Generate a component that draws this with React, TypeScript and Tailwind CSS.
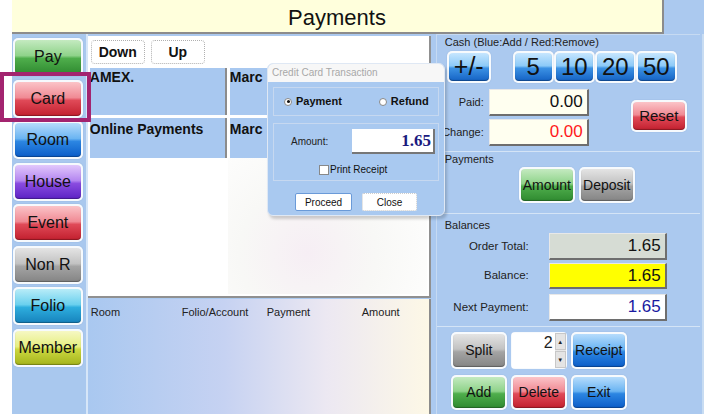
import React from 'react';

/* ── glossy button tones ─────────────────────────────────────────── */
const tones: Record<string, string> = {
  green: 'bg-[linear-gradient(to_bottom,#c4eac0_0%,#8fd38a_46%,#4fae4c_54%,#2f8a30_100%)]',
  red: 'bg-[linear-gradient(to_bottom,#fbc4c8_0%,#f08a94_46%,#e04a58_54%,#c21f2e_100%)]',
  blue: 'bg-[linear-gradient(to_bottom,#b6dcfc_0%,#6ab4f2_46%,#2c86e2_54%,#0a5cc8_100%)]',
  purple: 'bg-[linear-gradient(to_bottom,#e2c8fc_0%,#b486f0_46%,#8a4ce0_54%,#5c22c4_100%)]',
  gray: 'bg-[linear-gradient(to_bottom,#e4e4e4_0%,#c2c2c2_46%,#a4a4a4_54%,#848484_100%)]',
  cyan: 'bg-[linear-gradient(to_bottom,#b8ecf8_0%,#6ad0ee_46%,#2eaede_54%,#1682bc_100%)]',
  lime: 'bg-[linear-gradient(to_bottom,#f6f8c4_0%,#e6ee80_46%,#ccd840_54%,#a4b41c_100%)]',
  cash: 'bg-[linear-gradient(to_bottom,#c6e6fe_0%,#8ccaf8_46%,#3c92e4_54%,#1462c4_100%)]',
};

function Gloss({
  label,
  tone,
  className,
  text = 'text-[16px]',
}: {
  label: string;
  tone: string;
  className: string;
  text?: string;
}) {
  return (
    <div className={`rounded-[5px] bg-white/90 p-[2px] shadow-[0_0_1px_#7a9cc8] ${className}`}>
      <div
        className={`w-full h-full rounded-[4px] flex items-center justify-center text-[#111] ${text} ${tones[tone]} shadow-[inset_0_-1px_1px_rgba(0,0,0,0.3)]`}
      >
        {label}
      </div>
    </div>
  );
}

/* ── text field with sunken look ──────────────────────────────────── */
function Field({ value, className, color = 'text-[#111]' }: { value: string; className: string; color?: string }) {
  return (
    <div
      className={`flex items-center justify-end pr-[4px] text-[17px] ${color} border-r-2 border-b-2 border-[#6e6e6e] border-t border-l border-t-[#e8e8e8] border-l-[#e8e8e8] ${className}`}
    >
      {value}
    </div>
  );
}

const sideButtons = [
  { label: 'Pay', tone: 'green' },
  { label: 'Card', tone: 'red' },
  { label: 'Room', tone: 'blue' },
  { label: 'House', tone: 'purple' },
  { label: 'Event', tone: 'red' },
  { label: 'Non R', tone: 'gray' },
  { label: 'Folio', tone: 'cyan' },
  { label: 'Member', tone: 'lime' },
];

export default function App() {
  return (
    <div className="relative w-[704px] h-[414px] overflow-hidden bg-[#abc9ef] flex flex-col font-['Liberation_Sans',Arial,sans-serif] text-[#111]">
      {/* ── title bar ── */}
      <div className="flex h-[34px] shrink-0">
        <div className="w-[12px] bg-white" />
        <div className="w-[652px] bg-[#ffffdc] border-b-2 border-r-2 border-[#8c8c8c] flex items-center justify-center text-[22px] pt-[2px]">
          Payments
        </div>
        <div className="flex-1" />
      </div>

      <div className="flex flex-1 min-h-0">
        <div className="w-[12px] bg-white" />

        {/* ── left side buttons ── */}
        <div className="w-[76px] flex flex-col items-center gap-[3.5px] pt-[4px] pr-[2px] border-r-2 border-[#d6e6f8] bg-[#a9c8ee]">
          {sideButtons.map((b) => (
            <Gloss key={b.label} label={b.label} tone={b.tone} className="w-[70px] h-[38px] shrink-0" />
          ))}
        </div>

        {/* ── center ── */}
        <div className="w-[344px] flex flex-col pt-[2px]">
          <div className="h-[262px] bg-white border-b-2 border-r-2 border-[#909090] flex flex-col pl-[2px] pt-[4px]">
            <div className="flex gap-[6px] pl-[1px]">
              <div className="w-[54px] h-[24px] rounded-[4px] border border-dotted border-[#b0b0b0] flex items-center justify-center font-bold text-[14px]">
                Down
              </div>
              <div className="w-[54px] h-[24px] rounded-[4px] border border-dotted border-[#b0b0b0] flex items-center justify-center font-bold text-[14px]">
                Up
              </div>
            </div>
            <div className="mt-[4px] flex flex-col gap-[3px]">
              <div className="flex gap-[3px] h-[47px]">
                <div className="w-[137px] bg-[#a8c8f0] border-r-2 border-[#8c8c8c] font-bold text-[14px] leading-[18px]">AMEX.</div>
                <div className="w-[137px] bg-[#a8c8f0] border-r-2 border-[#8c8c8c] font-bold text-[14px] leading-[18px]">Marc</div>
              </div>
              <div className="flex gap-[3px] h-[40px]">
                <div className="w-[137px] bg-[#a8c8f0] border-r-2 border-[#8c8c8c] font-bold text-[14px] leading-[18px] pt-[2px]">Online Payments</div>
                <div className="w-[137px] bg-[#a8c8f0] border-r-2 border-[#8c8c8c] font-bold text-[14px] leading-[18px] pt-[2px]">Marc</div>
              </div>
            </div>
            <div className="flex-1 ml-[138px] mr-[2px] mb-[2px] bg-[radial-gradient(circle_at_40%_70%,#f6eef4_0%,#f8f8f6_45%,#ffffff_100%)]" />
          </div>
          <div className="flex-1 mt-[1px] border-r-2 border-[#8c8c8c] bg-[linear-gradient(to_right,#a9c8f0_0%,#c6d2f2_40%,#ece8f2_70%,#fdf8e6_100%)] flex text-[11px] text-[#222] pt-[5px] items-start">
            <span className="w-[94px] pl-[3px]">Room</span>
            <span className="w-[85px]">Folio/Account</span>
            <span className="w-[95px]">Payment</span>
            <span>Amount</span>
          </div>
        </div>

        {/* ── right panel ── */}
        <div className="w-[265px] ml-[5px] flex flex-col border-l border-t border-[#c6daf2] text-[#222]">
          <div className="text-[11px] pl-[8px] pt-[1px] leading-[13px]">Cash (Blue:Add / Red:Remove)</div>
          <div className="flex mt-[2px] pl-[10px]">
            <Gloss label="+/-" tone="cash" className="w-[44px] h-[32px]" text="text-[25px]" />
            <div className="flex ml-[22px]">
              {['5', '10', '20', '50'].map((n) => (
                <Gloss key={n} label={n} tone="cash" className="w-[41px] h-[32px]" text="text-[24px]" />
              ))}
            </div>
          </div>
          <div className="flex mt-[6px]">
            <div className="flex flex-col gap-[3px]">
              <div className="flex items-center">
                <span className="w-[52px] text-right text-[11px] pr-[5px]">Paid:</span>
                <Field value="0.00" className="w-[100px] h-[27px] bg-[#fffff0]" />
              </div>
              <div className="flex items-center">
                <span className="w-[52px] text-right text-[11px] pr-[5px] whitespace-nowrap">Change:</span>
                <Field value="0.00" color="text-[#ff1a1a]" className="w-[100px] h-[27px] bg-[#fffff0]" />
              </div>
            </div>
            <Gloss label="Reset" tone="red" className="ml-[42px] mt-[11px] w-[56px] h-[32px]" text="text-[15px]" />
          </div>
          <div className="mt-[5px] border-t border-[#d4e4f6] pt-[1px] pl-[8px] text-[11px] leading-[13px]">Payments</div>
          <div className="flex gap-[4px] ml-[82px] mt-[1px]">
            <Gloss label="Amount" tone="green" className="w-[56px] h-[36px]" text="text-[14px]" />
            <Gloss label="Deposit" tone="gray" className="w-[56px] h-[36px]" text="text-[14px]" />
          </div>
          <div className="mt-[10px] border-t border-[#d4e4f6] pt-[5px] pl-[8px] text-[11px] leading-[13px]">Balances</div>
          <div className="flex flex-col gap-[3px] mt-[1px]">
            <div className="flex items-center">
              <span className="w-[92px] text-right text-[11.5px]">Order Total:</span>
              <Field value="1.65" className="ml-[20px] w-[118px] h-[27px] bg-[#d6dcd4]" />
            </div>
            <div className="flex items-center">
              <span className="w-[92px] text-right text-[11.5px]">Balance:</span>
              <Field value="1.65" className="ml-[20px] w-[118px] h-[26px] bg-[#ffff00]" />
            </div>
            <div className="flex items-center mt-[2px]">
              <span className="w-[92px] text-right text-[11.5px]">Next Payment:</span>
              <Field value="1.65" color="text-[#1a1aa0]" className="ml-[20px] w-[118px] h-[27px] bg-white" />
            </div>
          </div>
          <div className="mt-[5px] border-t border-[#d4e4f6] pt-[5px] pl-[14px] flex flex-col gap-[6px]">
            <div className="flex gap-[4px]">
              <Gloss label="Split" tone="gray" className="w-[56px] h-[37px]" text="text-[14px]" />
              <div className="w-[56px] h-[37px] rounded-[4px] bg-white/90 p-[1px] flex">
                <div className="flex-1 bg-white text-right text-[16px] pr-[2px] leading-[20px]">2</div>
                <div className="w-[11px] flex flex-col gap-[1px] bg-[#e8e8e8]">
                  <div className="flex-1 bg-[#e4e4e4] border border-[#c8c8c8] flex items-center justify-center text-[6px] leading-none">▲</div>
                  <div className="flex-1 bg-[#e4e4e4] border border-[#c8c8c8] flex items-center justify-center text-[6px] leading-none">▼</div>
                </div>
              </div>
              <Gloss label="Receipt" tone="blue" className="w-[56px] h-[37px]" text="text-[14px]" />
            </div>
            <div className="flex gap-[4px]">
              <Gloss label="Add" tone="green" className="w-[56px] h-[35px]" text="text-[14px]" />
              <Gloss label="Delete" tone="red" className="w-[56px] h-[35px]" text="text-[14px]" />
              <Gloss label="Exit" tone="blue" className="w-[56px] h-[35px]" text="text-[14px]" />
            </div>
          </div>
        </div>
        <div className="flex-1 border-l-2 border-[#c8dcf2] ml-[2px]" />
      </div>

      {/* ── Card highlight ── */}
      <div className="absolute left-0 top-[72px] w-[91px] h-[50px] border-[4px] border-[#a3246f]" />

      {/* ── Credit card dialog ── */}
      <div className="absolute left-[267px] top-[63px] w-[178px] h-[153px] rounded-[6px] bg-[#a9c9f0] border border-[#dfe8f4] shadow-[2px_3px_3px_rgba(0,0,0,0.18)] overflow-hidden flex flex-col">
        <div className="h-[18px] bg-[#f7f7f7] text-[10px] text-[#a8a8a8] pl-[4px] leading-[18px]">Credit Card Transaction</div>
        <div className="mx-[5px] mt-[5px] h-[29px] border border-[#c6d8f0] flex items-center text-[11px] font-bold pl-[10px]">
          <span className="w-[8px] h-[8px] rounded-full bg-white border border-[#888] flex items-center justify-center">
            <span className="w-[3px] h-[3px] rounded-full bg-[#111]" />
          </span>
          <span className="ml-[4px]">Payment</span>
          <span className="ml-[37px] w-[8px] h-[8px] rounded-full bg-white border border-[#888]" />
          <span className="ml-[4px]">Refund</span>
        </div>
        <div className="mx-[5px] mt-[7px] h-[58px] border border-[#c6d8f0] flex flex-col">
          <div className="flex items-center mt-[5px]">
            <span className="w-[78px] pl-[17px] text-[10px] text-[#222]">Amount:</span>
            <div className="w-[83px] h-[25px] bg-white border-r-2 border-b-2 border-[#777] flex items-center justify-end pr-[2px] font-bold text-[17px] text-[#1a1a80] font-['Liberation_Serif',serif]">
              1.65
            </div>
          </div>
          <div className="flex items-center mt-[8px] ml-[45px] text-[10px]">
            <span className="w-[10px] h-[10px] bg-white border border-[#888]" />
            <span className="ml-[1px]">Print Receipt</span>
          </div>
        </div>
        <div className="flex ml-[27px] mt-[12px] gap-[10px] text-[10px]">
          <div className="w-[57px] h-[18px] bg-white rounded-[2px] border border-[#6a9ad8] flex items-center justify-center">Proceed</div>
          <div className="w-[55px] h-[18px] bg-white rounded-[2px] border border-dotted border-[#cccccc] flex items-center justify-center">Close</div>
        </div>
      </div>
    </div>
  );
}
